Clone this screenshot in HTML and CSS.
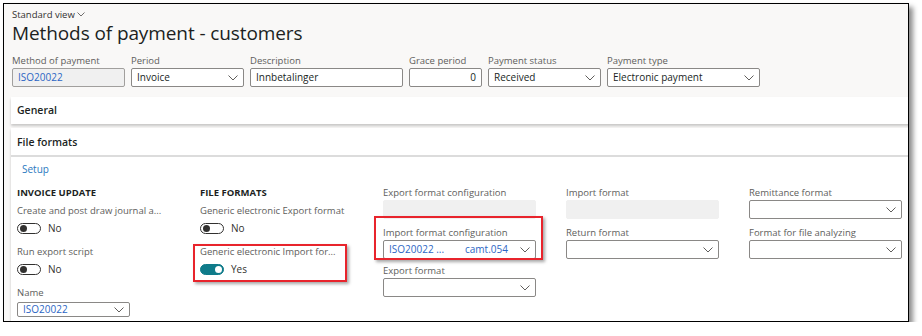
FILE: index.html
```html
<!DOCTYPE html>
<html>
<head>
<meta charset="utf-8">
<link rel="stylesheet" href="styles.css">
</head>
<body>
<div class="frame">
  <div class="header">
    <div class="view">Standard view <svg class="vchev" width="8" height="5" viewBox="0 0 8 5"><path d="M0.5 0.5 L4 4 L7.5 0.5" fill="none" stroke="#605e5c" stroke-width="0.9"/></svg></div>
    <h1 class="title">Methods of payment - customers</h1>
    <div class="fields">
      <div class="field w113">
        <div class="label">Method of payment</div>
        <div class="input disabled link">ISO20022</div>
      </div>
      <div class="field w113">
        <div class="label">Period</div>
        <div class="input select">Invoice<svg class="chev" width="10" height="6" viewBox="0 0 10 6"><path d="M0.5 0.5 L5 5 L9.5 0.5" fill="none" stroke="#605e5c" stroke-width="1"/></svg></div>
      </div>
      <div class="field w153">
        <div class="label">Description</div>
        <div class="input">Innbetalinger</div>
      </div>
      <div class="field w73">
        <div class="label">Grace period</div>
        <div class="input num">0</div>
      </div>
      <div class="field w113">
        <div class="label">Payment status</div>
        <div class="input select">Received<svg class="chev" width="10" height="6" viewBox="0 0 10 6"><path d="M0.5 0.5 L5 5 L9.5 0.5" fill="none" stroke="#605e5c" stroke-width="1"/></svg></div>
      </div>
      <div class="field w153">
        <div class="label">Payment type</div>
        <div class="input select">Electronic payment<svg class="chev" width="10" height="6" viewBox="0 0 10 6"><path d="M0.5 0.5 L5 5 L9.5 0.5" fill="none" stroke="#605e5c" stroke-width="1"/></svg></div>
      </div>
    </div>
  </div>

  <div class="card">
    <div class="card-h">General</div>
  </div>

  <div class="card files">
    <div class="card-h sep">File formats</div>
    <div class="setup">Setup</div>
    <div class="grid">
      <div class="col">
        <div class="group-h">INVOICE UPDATE</div>
        <div class="fitem">
          <div class="label">Create and post draw journal a...</div>
          <div class="trow"><span class="toggle"><span class="knob"></span></span><span class="tval">No</span></div>
        </div>
        <div class="fitem">
          <div class="label">Run export script</div>
          <div class="trow"><span class="toggle"><span class="knob"></span></span><span class="tval">No</span></div>
        </div>
        <div class="fitem">
          <div class="label">Name</div>
          <div class="input select w113 link short">ISO20022<svg class="chev" width="10" height="6" viewBox="0 0 10 6"><path d="M0.5 0.5 L5 5 L9.5 0.5" fill="none" stroke="#605e5c" stroke-width="1"/></svg></div>
        </div>
      </div>

      <div class="col">
        <div class="group-h">FILE FORMATS</div>
        <div class="fitem">
          <div class="label">Generic electronic Export format</div>
          <div class="trow"><span class="toggle"><span class="knob"></span></span><span class="tval">No</span></div>
        </div>
        <div class="fitem hl hl-a">
          <div class="label">Generic electronic Import for...</div>
          <div class="trow"><span class="toggle on"><span class="knob"></span></span><span class="tval">Yes</span></div>
        </div>
      </div>

      <div class="col">
        <div class="fitem">
          <div class="label">Export format configuration</div>
          <div class="input disabled2"></div>
        </div>
        <div class="fitem hl hl-b tight">
          <div class="label">Import format configuration</div>
          <div class="input select link"><span class="v1">ISO20022 ...</span><span class="v2">camt.054</span><svg class="chev" width="10" height="6" viewBox="0 0 10 6"><path d="M0.5 0.5 L5 5 L9.5 0.5" fill="none" stroke="#605e5c" stroke-width="1"/></svg></div>
        </div>
        <div class="fitem">
          <div class="label">Export format</div>
          <div class="input select"><svg class="chev" width="10" height="6" viewBox="0 0 10 6"><path d="M0.5 0.5 L5 5 L9.5 0.5" fill="none" stroke="#605e5c" stroke-width="1"/></svg></div>
        </div>
      </div>

      <div class="col">
        <div class="fitem">
          <div class="label">Import format</div>
          <div class="input disabled2"></div>
        </div>
        <div class="fitem">
          <div class="label">Return format</div>
          <div class="input select"><svg class="chev" width="10" height="6" viewBox="0 0 10 6"><path d="M0.5 0.5 L5 5 L9.5 0.5" fill="none" stroke="#605e5c" stroke-width="1"/></svg></div>
        </div>
      </div>

      <div class="col">
        <div class="fitem">
          <div class="label">Remittance format</div>
          <div class="input select"><svg class="chev" width="10" height="6" viewBox="0 0 10 6"><path d="M0.5 0.5 L5 5 L9.5 0.5" fill="none" stroke="#605e5c" stroke-width="1"/></svg></div>
        </div>
        <div class="fitem">
          <div class="label">Format for file analyzing</div>
          <div class="input select"><svg class="chev" width="10" height="6" viewBox="0 0 10 6"><path d="M0.5 0.5 L5 5 L9.5 0.5" fill="none" stroke="#605e5c" stroke-width="1"/></svg></div>
        </div>
      </div>
    </div>
  </div>
</div>
</body>
</html>
```
FILE: styles.css
```css
html, body {
  margin: 0;
  padding: 0;
  background: #ffffff;
}
body {
  font-family: "Open Sans", "Noto Sans", sans-serif;
  color: #323130;
}
.frame {
  margin: 3px 0 0 3px;
  width: 906px;
  height: 319px;
  box-sizing: border-box;
  border: 1px solid #000;
  background: #f9f8f7;
  overflow: hidden;
  box-shadow: 4px 4px 5px rgba(0, 0, 0, 0.45);
}
.header {
  height: 92px;
  box-sizing: border-box;
  padding: 5px 0 0 8px;
  background: #f9f8f7;
}
.view {
  font-size: 9.5px;
  line-height: 12px;
  height: 12px;
  color: #323130;
  display: flex;
  align-items: center;
  gap: 2px;
}
.vchev { margin-top: -2px; }
.title {
  margin: 0;
  font-weight: 400;
  font-size: 19px;
  line-height: 24px;
  height: 24px;
  color: #201f1e;
  letter-spacing: -0.1px;
}
.fields {
  display: flex;
  margin-top: 8px;
}
.field { margin-right: 6px; }
.field.w113 { width: 113px; }
.field.w153 { width: 153px; }
.field.w73 { width: 73px; margin-right: 6px; }
.label {
  font-size: 9.5px;
  line-height: 15px;
  height: 15px;
  color: #605e5c;
  white-space: nowrap;
}
.input {
  height: 19px;
  box-sizing: border-box;
  border: 1px solid #8a8886;
  border-radius: 2px;
  background: #fff;
  font-size: 10px;
  line-height: 17px;
  padding: 0 5px;
  color: #201f1e;
  display: flex;
  align-items: center;
  white-space: nowrap;
}
.input.select { justify-content: space-between; }
.input.select .chev { margin-left: auto; flex: none; }
.input.num { justify-content: flex-end; }
.input.disabled {
  background: #f0f0f0;
  border-color: #a19f9d;
}
.input.disabled2 {
  background: #f0f0f0;
  border-color: #f0f0f0;
}
.link { color: #2c66c4; }
.card {
  margin-left: 7px;
  width: 920px;
  background: #fff;
  box-shadow: 0 1.5px 2.5px rgba(0, 0, 0, 0.2);
  margin-top: 1px;
}
.card-h {
  height: 27px;
  box-sizing: border-box;
  padding-left: 6px;
  font-size: 10.5px;
  font-weight: 600;
  line-height: 27px;
  color: #201f1e;
}
.card.files { margin-top: 4px; height: 300px; }
.card-h.sep {
  height: 29px;
  line-height: 29px;
  border-bottom: 2px solid #dcdcdc;
}
.setup {
  font-size: 10px;
  line-height: 22px;
  height: 22px;
  color: #2b78c0;
  padding-left: 11px;
  margin-top: 1px;
}
.grid {
  display: grid;
  grid-template-columns: repeat(5, 183px);
  padding-left: 6px;
  margin-top: 5px;
}
.col {
  display: flex;
  flex-direction: column;
  width: 153px;
}
.group-h {
  font-size: 9.5px;
  font-weight: 700;
  line-height: 15px;
  height: 15px;
  margin-bottom: 3px;
  color: #201f1e;
}
.fitem {
  margin-bottom: 6px;
}
.fitem.tight { margin-bottom: 4px; }
.trow {
  height: 20px;
  display: flex;
  align-items: center;
  gap: 7px;
}
.toggle {
  width: 24px;
  height: 11px;
  box-sizing: border-box;
  border: 1px solid #323130;
  border-radius: 6px;
  background: #fff;
  display: flex;
  align-items: center;
  padding: 0 1.5px;
}
.knob {
  width: 7px;
  height: 7px;
  border-radius: 50%;
  background: #323130;
}
.toggle.on {
  background: #0f7b8a;
  border-color: #0f7b8a;
  justify-content: flex-end;
}
.toggle.on .knob { background: #fff; }
.tval {
  font-size: 10px;
  color: #323130;
}
.input.w113 { width: 113px; }
.input.short { height: 15px; margin-top: 2px; }
.v1 { width: 76px; }
.hl { position: relative; }
.hl::after {
  content: "";
  position: absolute;
  border: 2px solid #e8242c;
  box-shadow: 2px 2px 3px rgba(0, 0, 0, 0.35);
  pointer-events: none;
}
.hl-a::after { left: -7px; top: 0px; width: 150px; height: 34px; }
.hl-b::after { left: -9px; top: -9px; width: 165px; height: 40px; }
```
